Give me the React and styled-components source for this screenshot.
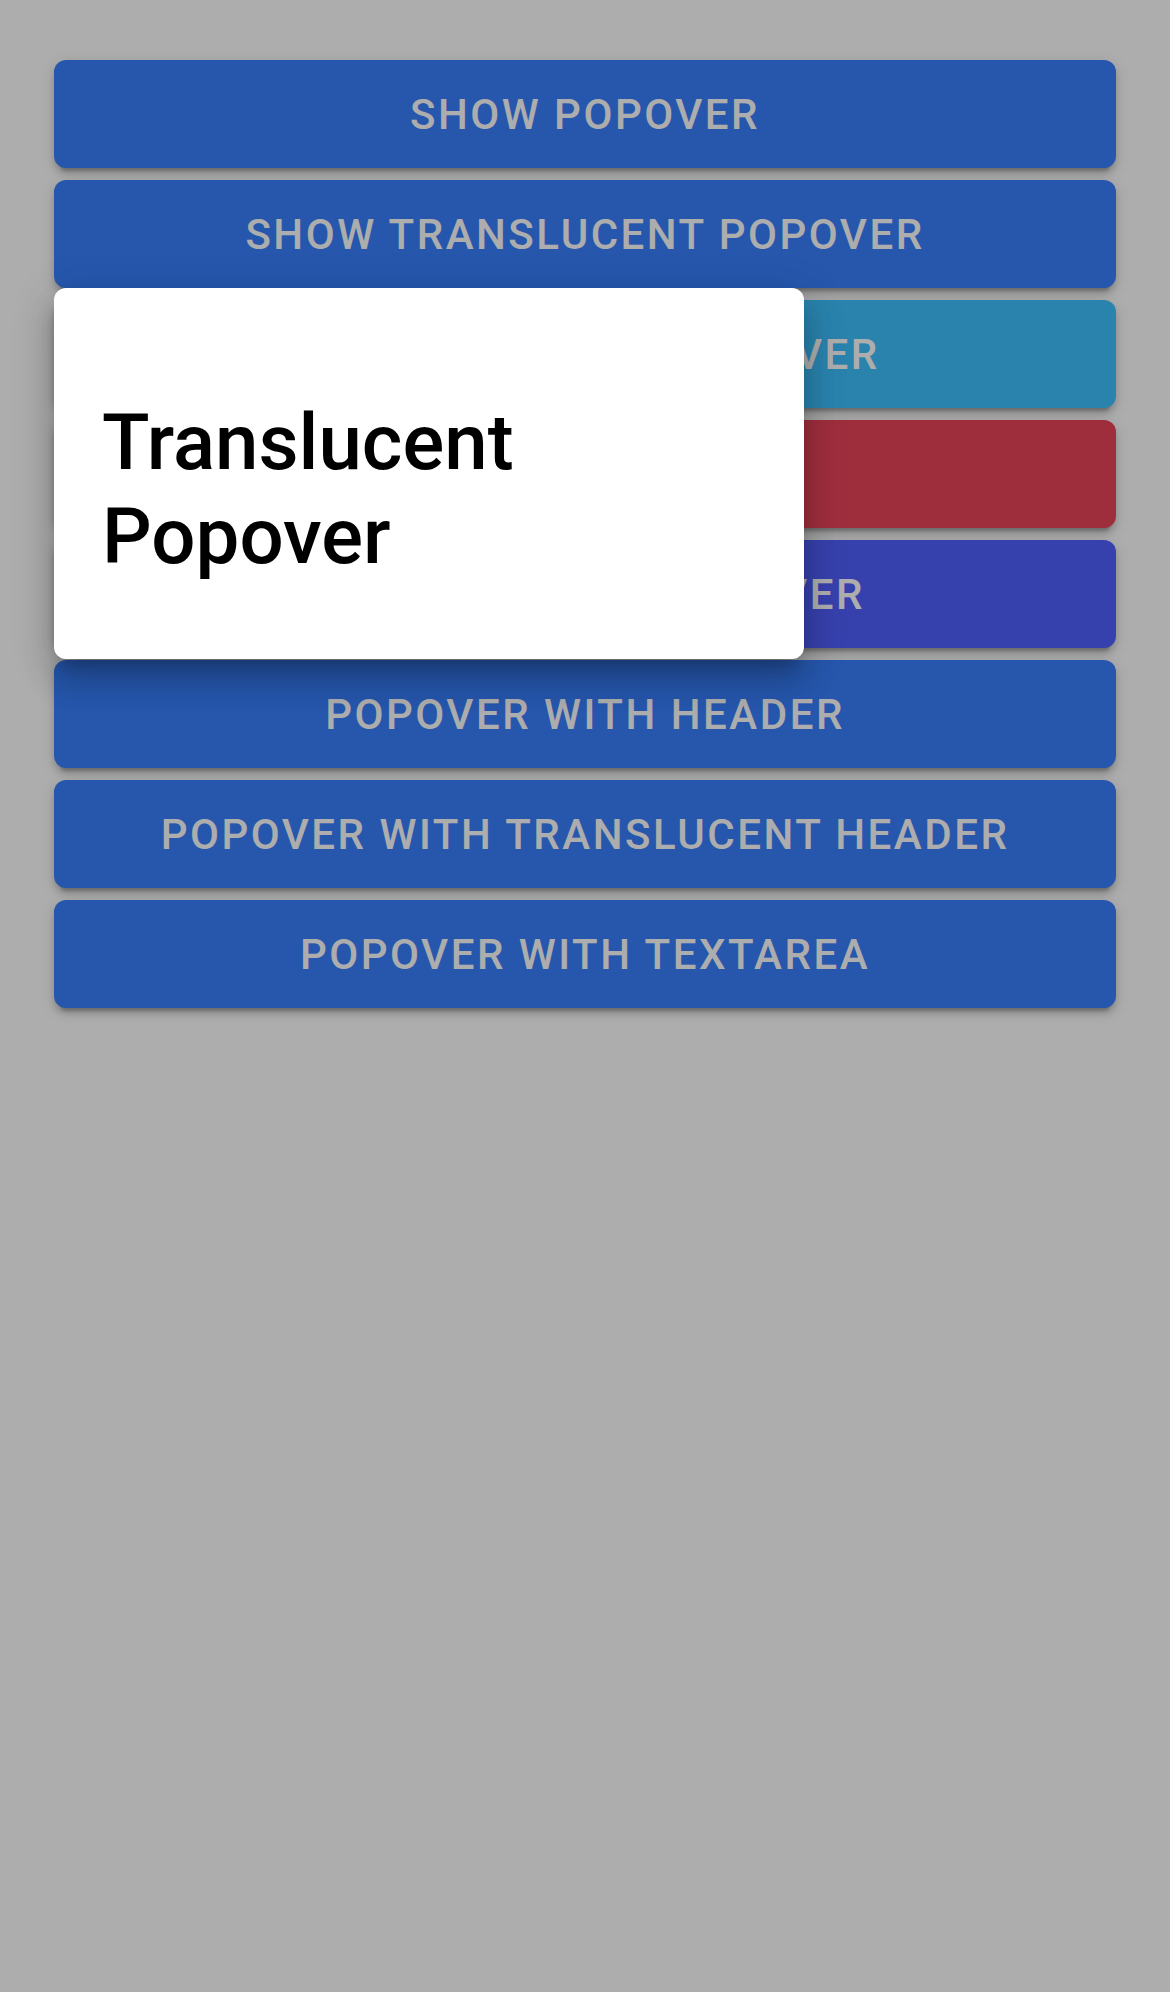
import React from "react";
import styled, { createGlobalStyle } from "styled-components";

const GlobalStyle = createGlobalStyle`
  html, body {
    margin: 0;
    padding: 0;
    background: #ffffff;
  }
  body {
    font-family: Roboto, "Noto Sans", "Liberation Sans", sans-serif;
    -webkit-font-smoothing: antialiased;
  }
`;

const buttons = [
  { label: "Show Popover", color: "#3880ff" },
  { label: "Show Translucent Popover", color: "#3880ff" },
  { label: "Show Long List Popover", color: "#3dc2ff" },
  { label: "No Event Popover", color: "#eb445a" },
  { label: "Custom Class Popover", color: "#5260ff" },
  { label: "Popover With Header", color: "#3880ff" },
  { label: "Popover With Translucent Header", color: "#3880ff" },
  { label: "Popover With Textarea", color: "#3880ff" },
];

const App = () => {
  return (
    <Page>
      <GlobalStyle />
      <Content>
        {buttons.map((b) => (
          <BlockButton key={b.label} bg={b.color}>
            {b.label}
          </BlockButton>
        ))}
      </Content>
      <Backdrop />
      <Popover>
        <PopoverContent>
          <Title>Translucent Popover</Title>
        </PopoverContent>
      </Popover>
    </Page>
  );
};

export default App;

const Page = styled.div`
  position: relative;
  width: 1170px;
  height: 1992px;
  overflow: hidden;
  background: #ffffff;
`;

const Content = styled.div`
  display: flex;
  flex-direction: column;
  gap: 12px;
  padding: 60px 54px;
`;

const BlockButton = styled.button`
  display: flex;
  align-items: center;
  justify-content: center;
  height: 108px;
  width: 100%;
  border: none;
  border-radius: 12px;
  background: ${(props) => props.bg};
  color: #ffffff;
  font-family: Roboto, "Liberation Sans", sans-serif;
  font-size: 42px;
  font-weight: 500;
  letter-spacing: 2.52px;
  text-transform: uppercase;
  box-shadow: 0 9px 3px -6px rgba(0, 0, 0, 0.2), 0 6px 6px 0 rgba(0, 0, 0, 0.14),
    0 3px 15px 0 rgba(0, 0, 0, 0.12);
  padding: 0 48px;
`;

const Backdrop = styled.div`
  position: absolute;
  inset: 0;
  background: rgba(0, 0, 0, 0.32);
`;

const Popover = styled.div`
  position: absolute;
  top: 288px;
  left: 54px;
  width: 750px;
  background: #ffffff;
  border-radius: 12px;
  box-shadow: 0 15px 15px -9px rgba(0, 0, 0, 0.2), 0 24px 30px 3px rgba(0, 0, 0, 0.14),
    0 9px 42px 6px rgba(0, 0, 0, 0.12);
`;

const PopoverContent = styled.div`
  padding: 48px;
`;

const Title = styled.h1`
  margin: 60px 0 28px;
  font-family: Roboto, "Liberation Sans", sans-serif;
  font-size: 78px;
  font-weight: 500;
  line-height: 1.2;
  color: #000000;
`;
